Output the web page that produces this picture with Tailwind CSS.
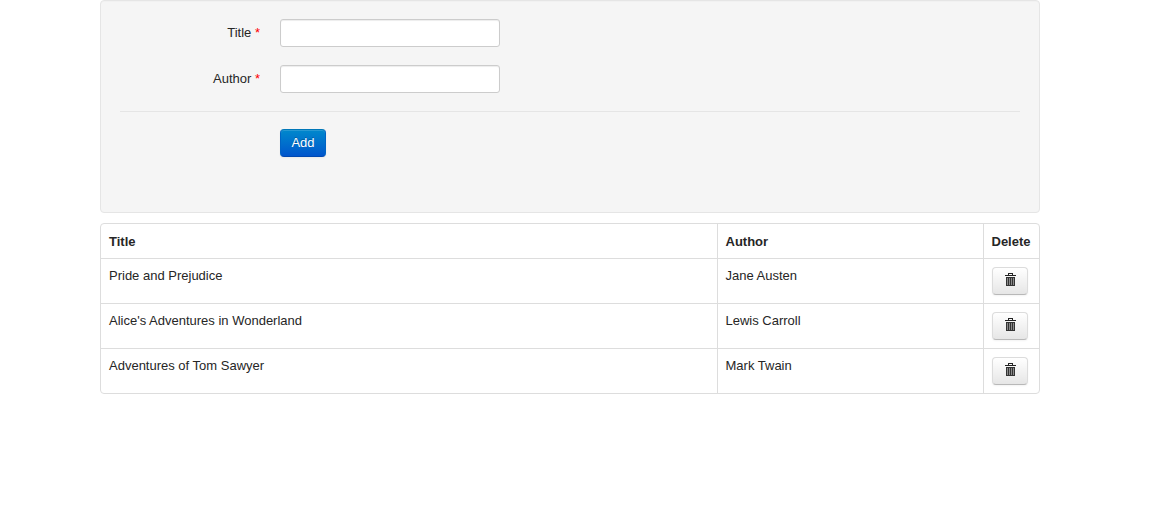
<!DOCTYPE html>
<html lang="en">
<head>
<meta charset="utf-8">
<meta name="viewport" content="width=device-width, initial-scale=1">
<title>Books</title>
<script src="https://cdn.jsdelivr.net/npm/@tailwindcss/browser@4"></script>
</head>
<body class="bg-white pr-[22px] font-['Liberation_Sans',Arial,sans-serif] text-[13px] leading-[18px] text-[#262626]">
<svg class="hidden" aria-hidden="true">
  <symbol id="trash" viewBox="0 0 11 13">
    <path fill="#222" d="M3 0h5v2h3v1H0V2h3zM4 1v1h3V1z"/>
    <path fill="#333" d="M1 4h9v9H1z"/>
    <path fill="#8a8a8a" d="M2 5h1v7H2zM4 5h1v7H4zM6 5h1v7H6zM8 5h1v7H8z"/>
  </symbol>
</svg>
<main class="mx-auto max-w-[940px]">
  <form class="mb-[10px] rounded-[4px] border border-[#e5e5e5] bg-[#f5f5f5] px-[19px] pt-[18px] pb-[55px] shadow-[inset_0_1px_1px_rgba(0,0,0,0.02)]">
    <div class="mb-[18px] flex gap-5">
      <label for="title" class="w-[140px] pt-[5px] text-right">Title <span class="text-[#ff0000]">*</span></label>
      <input id="title" type="text" required class="h-7 w-[220px] rounded-[3px] border border-[#cccccc] bg-white px-1 shadow-[inset_0_1px_1px_rgba(0,0,0,0.075)]">
    </div>
    <div class="flex gap-5">
      <label for="author" class="w-[140px] pt-[5px] text-right">Author <span class="text-[#ff0000]">*</span></label>
      <input id="author" type="text" required class="h-7 w-[220px] rounded-[3px] border border-[#cccccc] bg-white px-1 shadow-[inset_0_1px_1px_rgba(0,0,0,0.075)]">
    </div>
    <div class="mt-[18px] border-t border-[#e5e5e5] pt-[17px] pl-[160px]">
      <button type="submit" class="block h-7 w-[46px] rounded-[4px] border border-[#0064c4] border-t-[#0077b8] border-b-[#0048b0] bg-linear-to-b from-[#0088cc] to-[#0055cc] text-white shadow-[inset_0_1px_0_rgba(255,255,255,0.15),0_1px_2px_rgba(0,0,0,0.05)] [text-shadow:0_-1px_0_rgba(0,0,0,0.25)]">Add</button>
    </div>
  </form>
  <div class="overflow-hidden rounded-[4px] border border-[#dddddd]">
    <table class="w-full table-fixed">
      <thead>
        <tr class="h-[34px] text-left">
          <th class="px-2 pt-[2px] font-bold">Title</th>
          <th class="w-[266px] border-l border-[#dddddd] px-2 pt-[2px] font-bold">Author</th>
          <th class="w-[56px] border-l border-[#dddddd] px-2 pt-[2px] font-bold">Delete</th>
        </tr>
      </thead>
      <tbody class="align-top">
        <tr class="border-t border-[#dddddd]">
          <td class="p-2">Pride and Prejudice</td>
          <td class="border-l border-[#dddddd] p-2">Jane Austen</td>
          <td class="border-l border-[#dddddd] p-2"><button type="button" aria-label="Delete Pride and Prejudice" class="flex h-7 w-9 items-start justify-center rounded-[4px] border border-[#dcdcdc] border-b-[#b8b8b8] bg-linear-to-b from-white to-[#e6e6e6] pt-[5px] pl-px shadow-[0_1px_2px_rgba(0,0,0,0.05)]"><svg class="h-[13px] w-[11px]"><use href="#trash"/></svg></button></td>
        </tr>
        <tr class="border-t border-[#dddddd]">
          <td class="p-2">Alice's Adventures in Wonderland</td>
          <td class="border-l border-[#dddddd] p-2">Lewis Carroll</td>
          <td class="border-l border-[#dddddd] p-2"><button type="button" aria-label="Delete Alice's Adventures in Wonderland" class="flex h-7 w-9 items-start justify-center rounded-[4px] border border-[#dcdcdc] border-b-[#b8b8b8] bg-linear-to-b from-white to-[#e6e6e6] pt-[5px] pl-px shadow-[0_1px_2px_rgba(0,0,0,0.05)]"><svg class="h-[13px] w-[11px]"><use href="#trash"/></svg></button></td>
        </tr>
        <tr class="border-t border-[#dddddd]">
          <td class="p-2">Adventures of Tom Sawyer</td>
          <td class="border-l border-[#dddddd] p-2">Mark Twain</td>
          <td class="border-l border-[#dddddd] p-2"><button type="button" aria-label="Delete Adventures of Tom Sawyer" class="flex h-7 w-9 items-start justify-center rounded-[4px] border border-[#dcdcdc] border-b-[#b8b8b8] bg-linear-to-b from-white to-[#e6e6e6] pt-[5px] pl-px shadow-[0_1px_2px_rgba(0,0,0,0.05)]"><svg class="h-[13px] w-[11px]"><use href="#trash"/></svg></button></td>
        </tr>
      </tbody>
    </table>
  </div>
</main>
</body>
</html>
